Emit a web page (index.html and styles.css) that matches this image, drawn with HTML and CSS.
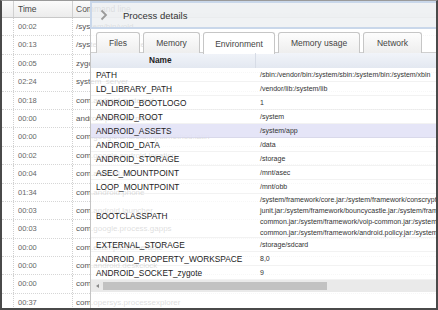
FILE: index.html
```html
<!DOCTYPE html>
<html lang="en">

<head>
  <meta charset="UTF-8">
  <title>Process explorer</title>
  <link rel="stylesheet" href="styles.css">
</head>

<body>
  <div id="frame">
    <div id="list">
      <div class="list-head">
        <span class="c0"></span>
        <span class="c1">Time</span>
        <span class="c2">Command line</span>
      </div>
      <div class="list-row"><span class="c0"></span><span class="c1">00:02</span><span class="c2">/system/bin/vold</span></div>
      <div class="list-row"><span class="c0"></span><span class="c1">00:13</span><span class="c2">/system/bin/surfaceflinger</span></div>
      <div class="list-row"><span class="c0"></span><span class="c1">00:05</span><span class="c2">zygote</span></div>
      <div class="list-row"><span class="c0"></span><span class="c1">02:24</span><span class="c2">system_server</span></div>
      <div class="list-row"><span class="c0"></span><span class="c1">00:18</span><span class="c2">com.android.systemui</span></div>
      <div class="list-row"><span class="c0"></span><span class="c1">00:00</span><span class="c2">android.process.media</span></div>
      <div class="list-row"><span class="c0"></span><span class="c1">00:00</span><span class="c2">com.google.android.inputmethod.latin</span></div>
      <div class="list-row"><span class="c0"></span><span class="c1">00:02</span><span class="c2">com.google.android.location</span></div>
      <div class="list-row"><span class="c0"></span><span class="c1">00:04</span><span class="c2">com.android.nfc</span></div>
      <div class="list-row"><span class="c0"></span><span class="c1">01:34</span><span class="c2">com.android.phone</span></div>
      <div class="list-row"><span class="c0"></span><span class="c1">00:03</span><span class="c2">com.android.launcher</span></div>
      <div class="list-row"><span class="c0"></span><span class="c1">00:03</span><span class="c2">com.google.process.gapps</span></div>
      <div class="list-row"><span class="c0"></span><span class="c1">00:00</span><span class="c2">com.example.vulnerable</span></div>
      <div class="list-row"><span class="c0"></span><span class="c1">00:00</span><span class="c2">com.android.deskclock</span></div>
      <div class="list-row"><span class="c0"></span><span class="c1">00:00</span><span class="c2">com.android.defcontainer</span></div>
      <div class="list-row"><span class="c0"></span><span class="c1">00:37</span><span class="c2">com.opersys.processexplorer</span></div>
    </div>

    <div id="dialog">
      <div class="dialog-head">
        <svg class="chevron" width="8" height="12" viewBox="0 0 8 12">
          <path d="M1.5 1.5 L6 6 L1.5 10.5" fill="none" stroke="#9a9a9a" stroke-width="1.8"/>
        </svg>
        <span class="dialog-title">Process details</span>
      </div>
      <div class="dialog-body">
        <div class="tabs">
          <span class="tab t-files">Files</span>
          <span class="tab t-memory">Memory</span>
          <span class="tab t-env active">Environment</span>
          <span class="tab t-usage">Memory usage</span>
          <span class="tab t-net">Network</span>
        </div>
        <div class="env">
          <div class="env-head"><span class="name">Name</span><span class="value"></span></div>
          <div class="env-row"><span class="name">PATH</span><span class="value">/sbin:/vendor/bin:/system/sbin:/system/bin:/system/xbin</span></div>
          <div class="env-row"><span class="name">LD_LIBRARY_PATH</span><span class="value">/vendor/lib:/system/lib</span></div>
          <div class="env-row"><span class="name">ANDROID_BOOTLOGO</span><span class="value">1</span></div>
          <div class="env-row"><span class="name">ANDROID_ROOT</span><span class="value">/system</span></div>
          <div class="env-row selected"><span class="name">ANDROID_ASSETS</span><span class="value">/system/app</span></div>
          <div class="env-row"><span class="name">ANDROID_DATA</span><span class="value">/data</span></div>
          <div class="env-row"><span class="name">ANDROID_STORAGE</span><span class="value">/storage</span></div>
          <div class="env-row"><span class="name">ASEC_MOUNTPOINT</span><span class="value">/mnt/asec</span></div>
          <div class="env-row"><span class="name">LOOP_MOUNTPOINT</span><span class="value">/mnt/obb</span></div>
          <div class="env-row tall"><span class="name">BOOTCLASSPATH</span><span class="value">/system/framework/core.jar:/system/framework/conscrypt.jar:/system/framework/okhttp.jar:/system/framework/core-<br>junit.jar:/system/framework/bouncycastle.jar:/system/framework/ext.jar:/system/framework/framework.jar<br>common.jar:/system/framework/voip-common.jar:/system/framework/mms-<br>common.jar:/system/framework/android.policy.jar:/system/framework/services.jar</span></div>
          <div class="env-row"><span class="name">EXTERNAL_STORAGE</span><span class="value">/storage/sdcard</span></div>
          <div class="env-row"><span class="name">ANDROID_PROPERTY_WORKSPACE</span><span class="value">8,0</span></div>
          <div class="env-row"><span class="name">ANDROID_SOCKET_zygote</span><span class="value">9</span></div>
        </div>
        <div class="hscroll">
          <span class="arrow"></span>
          <span class="thumb"></span>
        </div>
      </div>
    </div>
  </div>
</body>

</html>
```

FILE: styles.css
```css
* {
  margin: 0;
  padding: 0;
  box-sizing: border-box;
}

body {
  font-family: "Liberation Sans", Arial, sans-serif;
  background: #fff;
}

#frame {
  position: relative;
  width: 438px;
  height: 310px;
  overflow: hidden;
  border: 2px solid #4a4a4a;
  border-top: 1px solid #9a9a9a;
}

/* process list in the background */
.list-head,
.list-row {
  display: flex;
  white-space: nowrap;
}

.list-head {
  height: 17px;
  background: linear-gradient(#fbfbfb, #ececec);
  border-bottom: 1px solid #c8c8c8;
  font-size: 8.5px;
  color: #444;
  line-height: 16px;
}

.list-head span {
  border-right: 1px solid #d0d0d0;
}

.list-row {
  height: 18.4px;
  border-bottom: 1px dotted #d6d6d6;
  line-height: 18px;
  color: #666;
}

.list-row span {
  border-right: 1px dotted #cfcfcf;
}

.c0 {
  width: 12px;
}

.c1 {
  width: 59px;
  padding-left: 4px;
  font-size: 7.5px;
}

.list-head .c1 {
  font-size: 8.5px;
}

.c2 {
  flex: 1;
  padding-left: 3px;
  font-size: 8px;
  color: #555;
  border-right: none !important;
}

.list-head .c2 {
  font-size: 8.5px;
}

/* details dialog over the list */
#dialog {
  position: absolute;
  left: 88px;
  top: 0;
  right: 0;
  bottom: 0;
  display: flex;
  flex-direction: column;
}

.dialog-head {
  height: 28px;
  display: flex;
  align-items: center;
  padding-left: 8px;
  background: rgba(238, 240, 243, 0.88);
  border: 2px solid #c9d7ea;
  border-right: none;
}

.chevron {
  display: block;
}

.dialog-title {
  margin-left: 15px;
  font-size: 9.5px;
  color: #333;
}

.dialog-body {
  flex: 1;
  background: rgba(255, 255, 255, 0.8);
  border-left: 1px solid #c4c4c4;
  padding-top: 3px;
  overflow: hidden;
}

.tabs {
  display: flex;
  gap: 3px;
  padding-left: 5px;
  height: 21px;
  border-bottom: 1px solid #cfcfcf;
}

.tab {
  display: flex;
  align-items: center;
  justify-content: center;
  height: 21px;
  border: 1px solid #c6c6c6;
  border-bottom: none;
  border-radius: 3px 3px 0 0;
  background: linear-gradient(#fdfdfd, #eeeeee);
  font-size: 8.5px;
  color: #444;
}

.tab.active {
  height: 22px;
  background: #fff;
}

.t-files {
  width: 44px;
}

.t-memory {
  width: 57px;
}

.t-env {
  width: 72px;
}

.t-usage {
  width: 82px;
}

.t-net {
  width: 59px;
}

.env {
  font-size: 8.3px;
  color: #222;
}

.env-head,
.env-row {
  display: flex;
  white-space: nowrap;
}

.env-head {
  height: 15px;
  background: linear-gradient(#f1f4f9, #e3e8f1);
  font-weight: bold;
  line-height: 15px;
}

.env-head .name {
  padding-left: 58px;
  border-right: 1px solid #d7dce6;
}

.env-row {
  height: 14px;
  line-height: 14px;
  border-bottom: 1px solid rgba(0, 0, 0, 0.05);
}

.env-row.selected {
  background: rgba(226, 226, 246, 0.9);
}

.name {
  width: 165px;
  flex-shrink: 0;
  padding-left: 5px;
}

.value {
  flex: 1;
  padding-left: 4px;
  font-size: 7px;
  color: #333;
  overflow: hidden;
}

.env-row.tall {
  height: 44px;
  align-items: center;
}

.env-row.tall .value {
  line-height: 11px;
}

.hscroll {
  display: flex;
  align-items: center;
  height: 12px;
  background: rgba(232, 232, 232, 0.9);
}

.arrow {
  width: 0;
  height: 0;
  margin: 0 4px 0 5px;
  border-top: 2.5px solid transparent;
  border-bottom: 2.5px solid transparent;
  border-right: 3px solid #888;
}

.thumb {
  width: 224px;
  height: 8px;
  background: #c2c2c2;
}
```
